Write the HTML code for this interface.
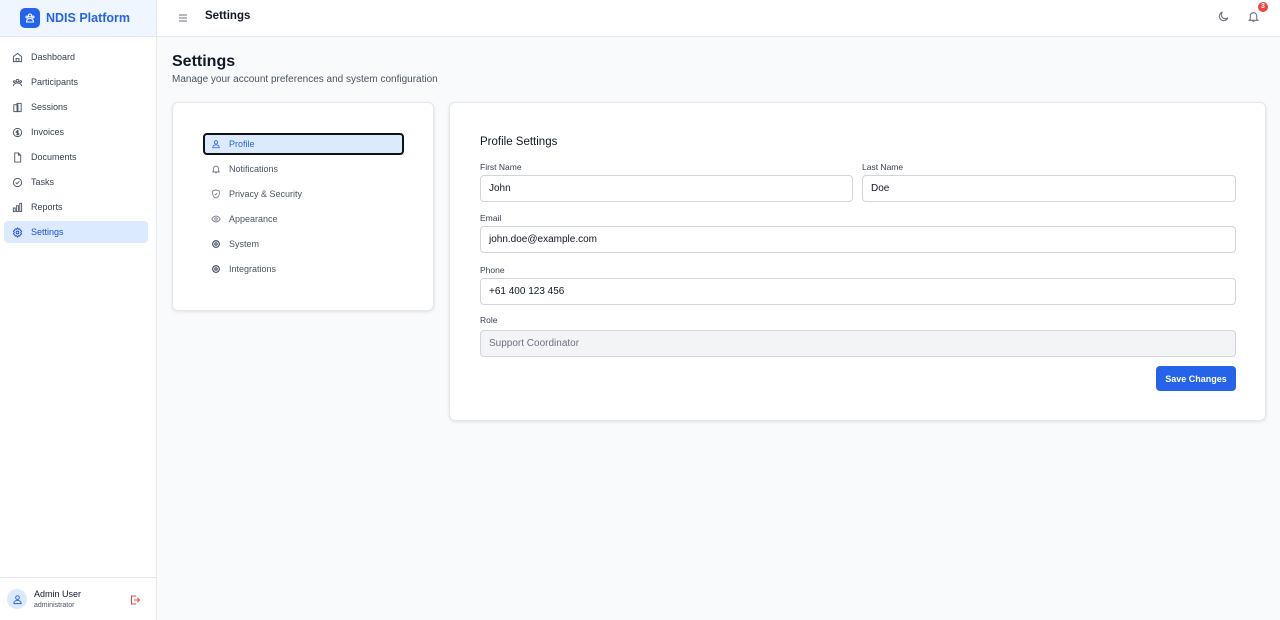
<!DOCTYPE html>
<html><head><meta charset="utf-8"><style>
*{box-sizing:border-box;margin:0;padding:0}
body{width:1280px;height:620px;overflow:hidden;font-family:"Liberation Sans",sans-serif;background:#f9fafb;color:#111827;position:relative}
.sb{position:absolute;left:0;top:0;width:157px;height:620px;background:#fff;border-right:1px solid #e5e7eb}
.logo{height:37px;background:#eff6ff;border-bottom:1px solid #e5e7eb;display:flex;align-items:center;padding-left:20px}
.logo .ic{width:20px;height:20px;border-radius:5px;background:#2563eb;display:flex;align-items:center;justify-content:center;margin-right:6px}
.logo span{color:#2563eb;font-weight:bold;font-size:12.5px}
.nav{padding-top:9px}
.ni{height:22px;margin:0 8px 3px 4px;display:flex;align-items:center;padding-left:8px;font-size:9px;color:#374151;border-radius:4px}
.ni svg{margin-right:8px}
.ni.a{background:#dbeafe;color:#1d4ed8}
.user{position:absolute;bottom:0;left:0;width:156px;height:43px;border-top:1px solid #e5e7eb;display:flex;align-items:center;padding-left:7px}
.av{width:20px;height:20px;border-radius:50%;background:#dbeafe;display:flex;align-items:center;justify-content:center;margin-right:7px}
.top{position:absolute;left:157px;top:0;right:0;height:37px;background:#fff;border-bottom:1px solid #e5e7eb}
h1{position:absolute;left:172px;top:53px;font-size:16px;font-weight:bold}
.sub{position:absolute;left:172px;top:74px;font-size:10px;color:#4b5563}
.card{position:absolute;background:#fff;border:1px solid #e5e7eb;border-radius:6px;box-shadow:0 1px 3px rgba(0,0,0,.1)}
.tab{position:absolute;left:30px;width:201px;height:22px;display:flex;align-items:center;padding-left:8px;font-size:9px;color:#4b5563}
.tab svg{margin-right:8px}
.tab.a{border:2px solid #111;background:#dbeafe;color:#2563eb;border-radius:4px;padding-left:6px}
.lbl{position:absolute;font-size:8.5px;color:#374151}
.inp{position:absolute;height:27px;border:1px solid #d1d5db;border-radius:4px;font-size:10px;padding-left:8px;display:flex;align-items:center;color:#111827}
</style></head><body>
<div class="sb">
<div class="logo"><div class="ic"><svg width="12" height="12" viewBox="0 0 24 24" fill="none" stroke="#fff" stroke-width="2.2"><circle cx="12" cy="7" r="3"/><circle cx="6" cy="10" r="2"/><circle cx="18" cy="10" r="2"/><path d="M5 20c0-4 3-7 7-7s7 3 7 7z"/></svg></div><span>NDIS Platform</span></div>
<div class="nav">
<div class="ni"><svg width="11" height="11" viewBox="0 0 24 24" fill="none" stroke="#4b5563" stroke-width="2"><path d="M3 10l9-7 9 7v11H3z"/><path d="M9 21v-7h6v7"/></svg>Dashboard</div>
<div class="ni"><svg width="11" height="11" viewBox="0 0 24 24" fill="none" stroke="#4b5563" stroke-width="2"><circle cx="12" cy="8" r="3"/><circle cx="5" cy="10" r="2"/><circle cx="19" cy="10" r="2"/><path d="M3 20c0-4 4-7 9-7s9 3 9 7"/></svg>Participants</div>
<div class="ni"><svg width="11" height="11" viewBox="0 0 24 24" fill="none" stroke="#4b5563" stroke-width="2"><rect x="4" y="6" width="9" height="15"/><rect x="11" y="3" width="9" height="18"/></svg>Sessions</div>
<div class="ni"><svg width="11" height="11" viewBox="0 0 24 24" fill="none" stroke="#4b5563" stroke-width="2"><circle cx="12" cy="12" r="9"/><path d="M15 9h-4a2 2 0 000 4h2a2 2 0 010 4H9M12 6v12"/></svg>Invoices</div>
<div class="ni"><svg width="11" height="11" viewBox="0 0 24 24" fill="none" stroke="#4b5563" stroke-width="2"><path d="M6 2h8l5 5v15H6z"/><path d="M14 2v5h5"/></svg>Documents</div>
<div class="ni"><svg width="11" height="11" viewBox="0 0 24 24" fill="none" stroke="#4b5563" stroke-width="2"><circle cx="12" cy="12" r="9"/><path d="M8 12l3 3 5-6"/></svg>Tasks</div>
<div class="ni"><svg width="11" height="11" viewBox="0 0 24 24" fill="none" stroke="#4b5563" stroke-width="2"><rect x="3" y="13" width="4" height="8"/><rect x="10" y="8" width="4" height="13"/><rect x="17" y="3" width="4" height="18"/></svg>Reports</div>
<div class="ni a"><svg width="11" height="11" viewBox="0 0 24 24" fill="none" stroke="#1d4ed8" stroke-width="2"><circle cx="12" cy="12" r="3"/><path d="M12 2l2 3 3-1 1 3 3 2-2 3 2 3-3 2-1 3-3-1-2 3-2-3-3 1-1-3-3-2 2-3-2-3 3-2 1-3 3 1z"/></svg>Settings</div>
</div>
<div class="user"><div class="av"><svg width="11" height="11" viewBox="0 0 24 24" fill="none" stroke="#2563eb" stroke-width="2"><circle cx="12" cy="8" r="4"/><path d="M4 21c0-5 4-7 8-7s8 2 8 7z"/></svg></div>
<div><div style="font-size:9px;color:#111827">Admin User</div><div style="font-size:7px;color:#4b5563;margin-top:3px">administrator</div></div>
<svg style="position:absolute;left:129px;top:16px" width="12" height="12" viewBox="0 0 24 24" fill="none" stroke="#ef4444" stroke-width="2"><path d="M14 4H5v16h9M10 12h11M17 8l4 4-4 4"/></svg></div>
</div>
<div class="top">
<svg style="position:absolute;left:20px;top:12px" width="12" height="12" viewBox="0 0 24 24" fill="none" stroke="#6b7280" stroke-width="2"><path d="M4 6h16M4 12h16M4 18h16"/></svg>
<div style="position:absolute;left:48px;top:10px;font-size:11.5px;font-weight:bold">Settings</div>
<svg style="position:absolute;left:1060px;top:10px" width="13" height="13" viewBox="0 0 24 24" fill="none" stroke="#6b7280" stroke-width="2"><path d="M20 14A8 8 0 1110 4a6 6 0 0010 10z"/></svg>
<svg style="position:absolute;left:1090px;top:10px" width="13" height="13" viewBox="0 0 24 24" fill="none" stroke="#6b7280" stroke-width="2"><path d="M6 17V11a6 6 0 0112 0v6l2 2H4z"/><path d="M10 21h4"/></svg>
<div style="position:absolute;left:1101px;top:2px;width:10px;height:10px;border-radius:50%;background:#ef4444;color:#fff;font-size:7px;font-weight:bold;text-align:center;line-height:10px">3</div>
</div>
<h1>Settings</h1>
<div class="sub">Manage your account preferences and system configuration</div>
<div class="card" style="left:172px;top:102px;width:262px;height:209px">
<div class="tab a" style="top:30px"><svg width="10" height="10" viewBox="0 0 24 24" fill="none" stroke="#2563eb" stroke-width="2"><circle cx="12" cy="8" r="4"/><path d="M4 21c0-5 4-7 8-7s8 2 8 7z"/></svg>Profile</div>
<div class="tab" style="top:55px"><svg width="10" height="10" viewBox="0 0 24 24" fill="none" stroke="#6b7280" stroke-width="2"><path d="M6 17V11a6 6 0 0112 0v6l2 2H4z"/><path d="M10 21h4"/></svg>Notifications</div>
<div class="tab" style="top:80px"><svg width="10" height="10" viewBox="0 0 24 24" fill="none" stroke="#6b7280" stroke-width="2"><path d="M12 2l8 3v6c0 6-4 9-8 11-4-2-8-5-8-11V5z"/><path d="M9 12l2 2 4-4"/></svg>Privacy &amp; Security</div>
<div class="tab" style="top:105px"><svg width="10" height="10" viewBox="0 0 24 24" fill="none" stroke="#6b7280" stroke-width="2"><path d="M2 12s4-7 10-7 10 7 10 7-4 7-10 7S2 12 2 12z"/><circle cx="12" cy="12" r="3"/></svg>Appearance</div>
<div class="tab" style="top:130px"><svg width="10" height="10" viewBox="0 0 24 24" fill="none" stroke="#374151" stroke-width="2.5"><circle cx="12" cy="12" r="8"/><circle cx="12" cy="12" r="3"/></svg>System</div>
<div class="tab" style="top:155px"><svg width="10" height="10" viewBox="0 0 24 24" fill="none" stroke="#374151" stroke-width="2.5"><circle cx="12" cy="12" r="8"/><circle cx="12" cy="12" r="3"/></svg>Integrations</div>
</div>
<div class="card" style="left:449px;top:102px;width:817px;height:319px">
<div style="position:absolute;left:30px;top:33px;font-size:11.5px">Profile Settings</div>
<div class="lbl" style="left:30px;top:59px">First Name</div>
<div class="lbl" style="left:412px;top:59px">Last Name</div>
<div class="inp" style="left:30px;top:72px;width:373px">John</div>
<div class="inp" style="left:412px;top:72px;width:374px">Doe</div>
<div class="lbl" style="left:30px;top:110px">Email</div>
<div class="inp" style="left:30px;top:123px;width:756px">john.doe@example.com</div>
<div class="lbl" style="left:30px;top:162px">Phone</div>
<div class="inp" style="left:30px;top:175px;width:756px">+61 400 123 456</div>
<div class="lbl" style="left:30px;top:212px">Role</div>
<div class="inp" style="left:30px;top:227px;width:756px;background:#f3f4f6;color:#6b7280">Support Coordinator</div>
<div style="position:absolute;left:706px;top:263px;width:80px;height:25px;background:#2563eb;color:#fff;border-radius:4px;font-size:9px;font-weight:bold;display:flex;align-items:center;justify-content:center">Save Changes</div>
</div>
</body></html>
